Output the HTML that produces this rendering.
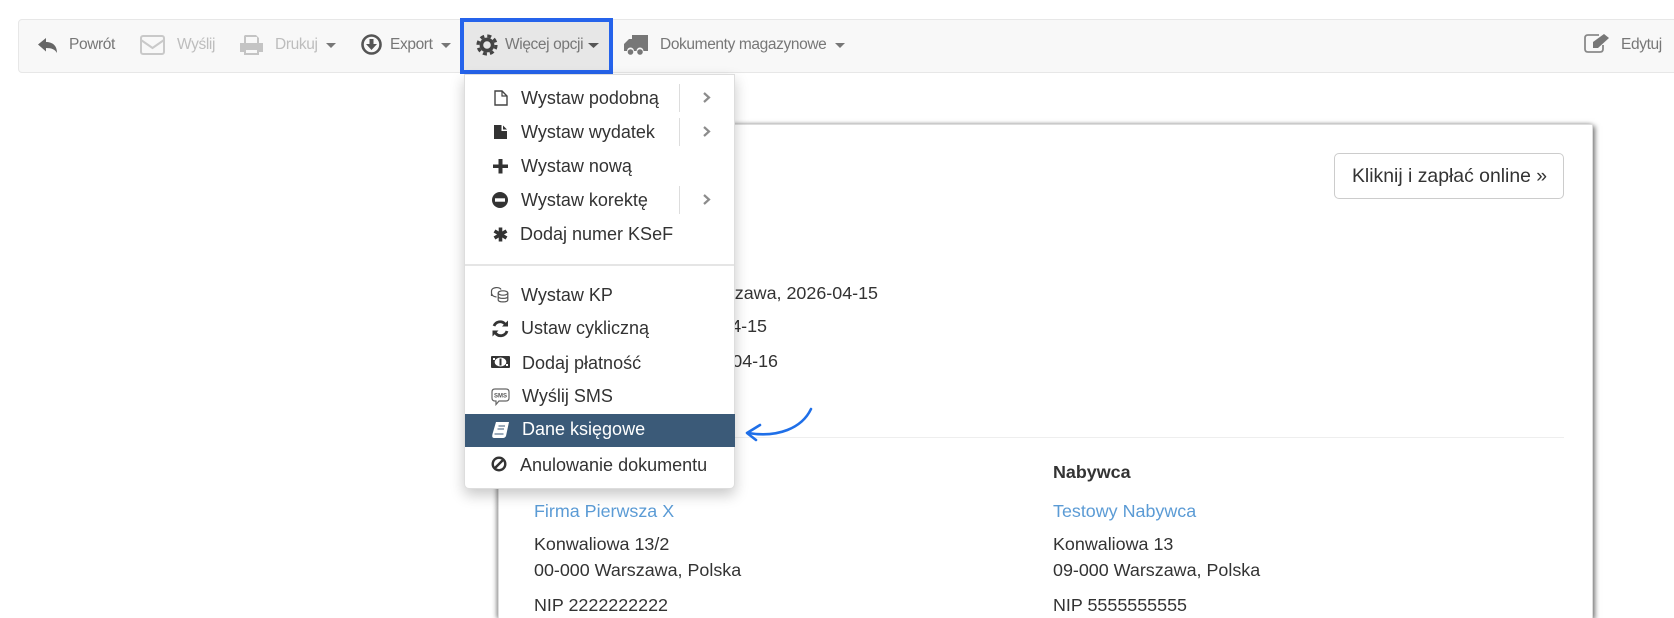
<!DOCTYPE html>
<html lang="pl"><head><meta charset="utf-8"><title>Faktura</title>
<style>
html,body{margin:0;padding:0;background:#fff;width:1674px;height:618px;overflow:hidden}
body{font-family:"Liberation Sans",Arial,sans-serif;position:relative;color:#333}
#p{position:absolute;left:0;top:0;width:1674px;height:618px;overflow:hidden;filter:blur(.35px)}
.t{position:absolute;white-space:nowrap;line-height:20px;height:20px}
.b{position:absolute;box-sizing:border-box}
.tb{font-size:15.5px;letter-spacing:-.38px;color:#777}
.dis{color:#bdbdbd}
.m{font-size:18px;color:#333}
.c{font-size:17.9px;color:#333}
.l{color:#5b9bd5}
</style></head><body><div id="p">
<div class="b" style="left:18px;top:19px;width:1660px;height:54px;background:#f8f8f8;border:1px solid #e7e7e7;border-radius:4px"></div>
<!-- card -->
<div class="b" style="left:498px;top:124px;width:1095px;height:494px;background:#fff;border:1px solid #ddd;border-bottom:0;box-shadow:2px 2px 5px #777,-2px 0 4px #aaa"></div>
<div class="b" style="left:1334px;top:153px;width:230px;height:46px;background:#fff;border:1px solid #ccc;border-radius:5px"></div>
<div class="t" style="left:1352px;top:166px;font-size:19.4px;color:#333">Kliknij i zapłać online »</div>
<div class="b" style="left:498px;top:437px;width:1066px;height:1px;background:#eee"></div>
<div class="t c" style="right:796px;top:283px">Warszawa, 2026-04-15</div>
<div class="t c" style="right:907px;top:316px">2026-04-15</div>
<div class="t c" style="right:896px;top:351px">2026-04-16</div>
<div class="t c" style="left:1053px;top:462px;font-weight:bold">Nabywca</div>
<div class="t c l" style="left:534px;top:501px">Firma Pierwsza X</div>
<div class="t c" style="left:534px;top:534px">Konwaliowa 13/2</div>
<div class="t c" style="left:534px;top:560px">00-000 Warszawa, Polska</div>
<div class="t c" style="left:534px;top:595px">NIP 2222222222</div>
<div class="t c l" style="left:1053px;top:501px">Testowy Nabywca</div>
<div class="t c" style="left:1053px;top:534px">Konwaliowa 13</div>
<div class="t c" style="left:1053px;top:560px">09-000 Warszawa, Polska</div>
<div class="t c" style="left:1053px;top:595px">NIP 5555555555</div>
<!-- active button -->
<div class="b" style="left:460px;top:18px;width:153px;height:56px;background:#e7e7e7;border:4px solid #2563eb"></div>
<!-- menu -->
<div class="b" style="left:464px;top:74px;width:271px;height:415px;background:#fff;border:1px solid #ddd;border-radius:0 0 5px 5px;box-shadow:0 6px 14px rgba(0,0,0,.22)"></div>
<div class="b" style="left:465px;top:264px;width:269px;height:2px;background:#e5e5e5"></div>
<div class="b" style="left:465px;top:414px;width:270px;height:33px;background:#3b5a78"></div>
<div class="b" style="left:679px;top:84px;width:1px;height:28px;background:#ddd"></div>
<div class="b" style="left:679px;top:118px;width:1px;height:28px;background:#ddd"></div>
<div class="b" style="left:679px;top:186px;width:1px;height:28px;background:#ddd"></div>
<!-- toolbar text -->
<div class="t tb" style="left:69px;top:35px">Powrót</div>
<div class="t tb dis" style="left:177px;top:35px">Wyślij</div>
<div class="t tb dis" style="left:275px;top:35px">Drukuj</div>
<div class="t tb" style="left:390px;top:35px">Export</div>
<div class="t tb" style="left:505px;top:35px">Więcej opcji</div>
<div class="t tb" style="left:660px;top:35px">Dokumenty magazynowe</div>
<div class="t tb" style="left:1621px;top:35px">Edytuj</div>
<!-- menu text -->
<div class="t m" style="left:521px;top:88px">Wystaw podobną</div>
<div class="t m" style="left:521px;top:122px">Wystaw wydatek</div>
<div class="t m" style="left:521px;top:156px">Wystaw nową</div>
<div class="t m" style="left:521px;top:190px">Wystaw korektę</div>
<div class="t m" style="left:520px;top:224px">Dodaj numer KSeF</div>
<div class="t m" style="left:521px;top:285px">Wystaw KP</div>
<div class="t m" style="left:521px;top:318px">Ustaw cykliczną</div>
<div class="t m" style="left:522px;top:353px">Dodaj płatność</div>
<div class="t m" style="left:522px;top:386px">Wyślij SMS</div>
<div class="t m" style="left:522px;top:419px;color:#fff">Dane księgowe</div>
<div class="t m" style="left:520px;top:455px">Anulowanie dokumentu</div>
<!-- icons -->
<svg width="1674" height="618" viewBox="0 0 1674 618" style="position:absolute;left:0;top:0;pointer-events:none">
<!-- reply -->
<path d="M38 44.500L46 38V42C52 42 57 45 57 53C55 49.500 52 48 46 48V51.500Z" fill="#666"/>
<!-- envelope -->
<g fill="none" stroke="#c9c9c9" stroke-width="2">
<rect x="141" y="36" width="23" height="18" rx="2"/><path d="M141 40L152.500 48L164 40"/></g>
<!-- print -->
<path d="M245 35H256L259 38V43H263V52H259V55H244V52H240V43H244V36Z" fill="#c4c4c4"/><rect x="246" y="37" width="11" height="6" fill="#f8f8f8"/><rect x="246" y="50" width="11" height="3" fill="#f8f8f8"/>
<!-- carets -->
<g>
<path d="M326 43h10l-5 5z" fill="#777"/><path d="M441 43h10l-5 5z" fill="#777"/>
<path d="M588 43h11l-5.500 5z" fill="#555"/><path d="M835 43h10l-5 5z" fill="#777"/></g>
<!-- download -->
<circle cx="371.500" cy="44.500" r="9" fill="none" stroke="#555" stroke-width="2.600"/><path d="M369.500 39h4v5h3.500l-5.500 6-5.500-6h3.500z" fill="#555"/>
<!-- cog -->
<circle cx="487" cy="45" r="9" fill="none" stroke="#444" stroke-width="3.200" stroke-dasharray="4 3.070"/><circle cx="487" cy="45" r="5.600" fill="none" stroke="#444" stroke-width="3.600"/>
<!-- truck -->
<path d="M632 35H648V51H643.500A3.500 3.500 0 0 0 636.500 51H634A3.500 3.500 0 0 0 627 51H624V44L629 39H632Z" fill="#777"/><circle cx="630.500" cy="52" r="2.800" fill="#777"/><circle cx="640" cy="52" r="2.800" fill="#777"/>
<!-- edit -->
<path d="M1603 45V49Q1603 52 1600 52H1588Q1585 52 1585 49V38Q1585 35 1588 35H1599" fill="none" stroke="#8a8a8a" stroke-width="1.800"/><path d="M1593 42L1604 34L1609 38L1598 48H1593Z" fill="#777"/>
<!-- chevrons -->
<g fill="none" stroke="#8c8c8c" stroke-width="2.200"><path d="M704 93L709 97.500L704 102"/><path d="M704 127L709 131.500L704 136"/><path d="M704 195L709 199.500L704 204"/></g>
<!-- file-o -->
<path d="M495 91H502L507 96V105H495Z" fill="none" stroke="#444" stroke-width="1.400"/><path d="M502 91V96H507" fill="none" stroke="#444" stroke-width="1.200"/>
<!-- file -->
<path d="M494 125H501.500V131H507V139H494ZM503 125.500L507 129.500H503Z" fill="#333"/>
<!-- plus -->
<path d="M498.500 159h4v5.500h5.500v3.500h-5.500v5.500h-4v-5.500h-5.500v-3.500h5.500z" fill="#333"/>
<!-- minus circle -->
<circle cx="500" cy="200" r="8" fill="#333"/><rect x="495" y="198.300" width="10" height="3.400" fill="#fff"/>
<!-- asterisk -->
<g stroke="#333" stroke-width="3.600"><path d="M500.500 227.500V241.500"/><path d="M494.500 231L506.500 238"/><path d="M506.500 231L494.500 238"/></g>
<!-- coins / KP -->
<g fill="none" stroke="#555" stroke-width="1.200"><ellipse cx="503" cy="293" rx="4.800" ry="2.200"/><path d="M498.200 293V300C498.200 302.500 507.800 302.500 507.800 300V293M498.200 296.500C498.200 299 507.800 299 507.800 296.500"/><path d="M496.500 297C493 296.500 491.500 295 491.500 293V291C491.500 287 500 286.500 501 289.500M491.500 293.500V296"/></g>
<!-- refresh -->
<g fill="none" stroke="#333" stroke-width="2.800"><path d="M494 326A6.500 6.500 0 0 1 505 324"/><path d="M507 331A6.500 6.500 0 0 1 495.500 333"/></g><path d="M502 326.500H508V320.500Z" fill="#333"/><path d="M498.500 330.500H492.500V336.500Z" fill="#333"/>
<!-- money -->
<rect x="491" y="356" width="19" height="12" fill="#333" rx="1"/><ellipse cx="500.500" cy="362" rx="5.800" ry="4.500" fill="#fff"/><rect x="499.500" y="358.500" width="2" height="7" fill="#333"/><rect x="493" y="358" width="2" height="2" fill="#fff"/><rect x="506" y="364" width="2" height="2" fill="#fff"/>
<!-- sms -->
<path d="M495 389H506Q509 389 509 392V398Q509 401 506 401H499L496 404.500V401H495Q492 401 492 398V392Q492 389 495 389Z" fill="#fff" stroke="#666" stroke-width="1.200"/>
<text x="500.500" y="397.500" font-family="Liberation Sans,sans-serif" font-size="6" font-weight="bold" text-anchor="middle" fill="#555">SMS</text>
<!-- book -->
<path d="M496 422H509L506 436Q505 438 503 438H494Q491.500 438 492.500 434Z" fill="#fff"/><path d="M498.500 426H505M497.500 429H504M494.500 434H503.500" stroke="#3b5a78" stroke-width="1"/>
<!-- ban -->
<circle cx="499" cy="464" r="6.300" fill="none" stroke="#333" stroke-width="2.400"/><path d="M494.500 468.500L503.500 459.500" stroke="#333" stroke-width="2.400"/>
<!-- arrow -->
<g fill="none" stroke="#1f6fe8" stroke-width="2.600" stroke-linecap="round" stroke-linejoin="round"><path d="M811 409C802 428 778 438 748 433"/><path d="M760 425L747 433L756 440"/></g>
</svg>
</div></body></html>
